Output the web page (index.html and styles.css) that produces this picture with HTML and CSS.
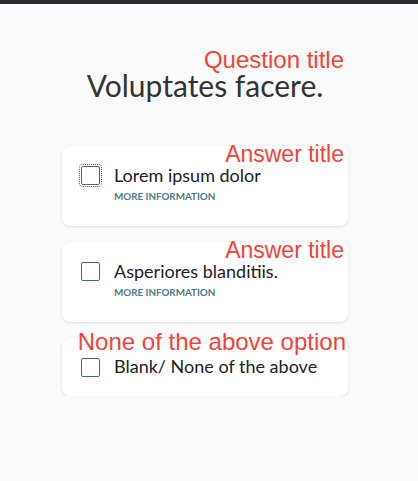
FILE: index.html
```html
<!DOCTYPE html>
<html>
<head>
<meta charset="utf-8">
<link rel="stylesheet" href="styles.css">
</head>
<body>
<div class="topbar"></div>
<main class="page">
  <div class="question">
    <span class="note note-question">Question title</span>
    <h1 class="question-title">Voluptates facere.</h1>
  </div>
  <div class="answers">
    <div class="card">
      <span class="note note-answer">Answer title</span>
      <div class="row">
        <span class="check focused"></span>
        <div class="label">
          <div class="answer-text">Lorem ipsum dolor</div>
          <div class="more">MORE INFORMATION</div>
        </div>
      </div>
    </div>
    <div class="card">
      <span class="note note-answer">Answer title</span>
      <div class="row">
        <span class="check"></span>
        <div class="label">
          <div class="answer-text">Asperiores blanditiis.</div>
          <div class="more">MORE INFORMATION</div>
        </div>
      </div>
    </div>
    <div class="card card-none">
      <span class="note note-none">None of the above option</span>
      <div class="row">
        <span class="check"></span>
        <div class="label">
          <div class="answer-text">Blank/ None of the above</div>
        </div>
      </div>
    </div>
  </div>
</main>
</body>
</html>
```
FILE: styles.css
```css
* { box-sizing: border-box; }
html, body {
  margin: 0;
  padding: 0;
  background: #fafafa;
  font-family: Lato, "Noto Sans", sans-serif;
  color: #222;
}
.topbar {
  height: 4px;
  background: #2b2a30;
}
.page {
  width: 286px;
  margin-left: 62px;
  padding-top: 66px;
}
.question {
  position: relative;
  text-align: center;
}
.question-title {
  margin: 0;
  font-weight: 400;
  font-size: 30px;
  line-height: 30px;
  color: #333;
}
.note {
  position: absolute;
  font-family: "Liberation Sans", Arial, sans-serif;
  font-size: 24px;
  line-height: 22px;
  color: #f44336;
  white-space: nowrap;
}
.note-question {
  right: 4px;
  top: -21px;
}
.answers {
  margin-top: 46px;
  display: flex;
  flex-direction: column;
  gap: 16px;
}
.card {
  position: relative;
  background: #fff;
  border-radius: 8px;
  box-shadow: 0 1px 3px rgba(0,0,0,0.13);
  padding: 20px 19px;
  height: 80px;
}
.card-none {
  height: 58px;
  padding-top: 20px;
}
.note-answer {
  right: 4px;
  top: -3px;
  font-size: 23px;
}
.note-none {
  right: 2px;
  top: -7px;
}
.row {
  display: flex;
  align-items: flex-start;
  gap: 14px;
}
.check {
  flex: none;
  width: 19px;
  height: 19px;
  border: 1.5px solid #3e6e72;
  border-radius: 2px;
}
.check.focused {
  outline: 1px dotted #555;
  outline-offset: 1px;
}
.answer-text {
  font-size: 18px;
  line-height: 19px;
  color: #222;
}
.card-none .answer-text {
  line-height: 17px;
}
.more {
  margin-top: 4px;
  font-size: 9.8px;
  font-weight: 700;
  letter-spacing: 0;
  line-height: 14px;
  color: #4a7c82;
}
```
